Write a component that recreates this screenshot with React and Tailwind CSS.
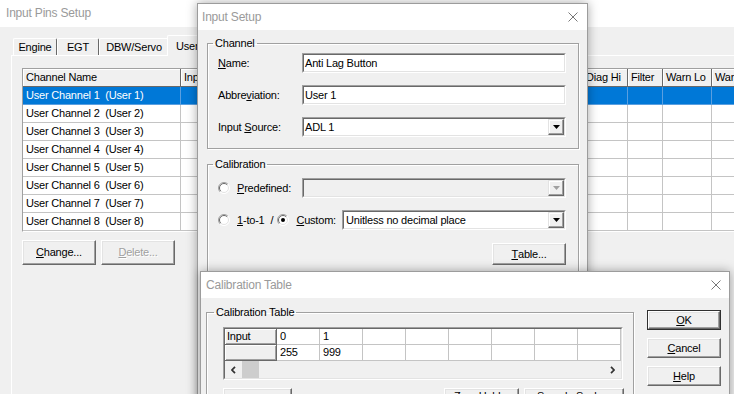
import React from "react";

function U({ children }) {
  return <span className="underline decoration-1 underline-offset-[1px]">{children}</span>;
}

function CloseX() {
  return (
    <svg width="10" height="10" viewBox="0 0 10 10" className="shrink-0">
      <path d="M0.5 0.5 L9.5 9.5 M9.5 0.5 L0.5 9.5" stroke="#777777" strokeWidth="1" fill="none" />
    </svg>
  );
}

function TitleBar({ children, pl, pr }) {
  return (
    <div className={`h-[26px] bg-white flex items-center justify-between ${pl} ${pr} text-[12px] text-[#9a9a9a]`}>
      <span>{children}</span>
      <CloseX />
    </div>
  );
}

function Btn({ children, className = "", disabled = false, align = "items-center" }) {
  return (
    <div
      className={`flex ${align} justify-center bg-[#f0f0f0] border border-t-white border-l-white border-r-[#696969] border-b-[#696969] shadow-[inset_-1px_-1px_0_#a0a0a0,inset_1px_1px_0_#e3e3e3] ${
        disabled ? "text-[#a0a0a0] [text-shadow:1px_1px_0_#ffffff]" : "text-black"
      } ${className}`}
    >
      {children}
    </div>
  );
}

function DefBtn({ children, className = "" }) {
  return (
    <div className={`border border-[#303030] ${className}`}>
      <Btn className="w-full h-full">{children}</Btn>
    </div>
  );
}

function Field({ className = "", bg = "bg-white", children }) {
  return (
    <div className={`border border-t-[#a0a0a0] border-l-[#a0a0a0] border-r-white border-b-white ${className}`}>
      <div className={`h-full border border-t-[#696969] border-l-[#696969] border-r-[#e3e3e3] border-b-[#e3e3e3] ${bg} flex items-center`}>
        {children}
      </div>
    </div>
  );
}

function DropBtn({ disabled = false }) {
  return (
    <div className="ml-auto w-[16px] h-full flex items-center justify-center bg-[#f0f0f0] border border-t-[#e3e3e3] border-l-[#e3e3e3] border-r-[#696969] border-b-[#696969] shadow-[inset_-1px_-1px_0_#a0a0a0,inset_1px_1px_0_#ffffff]">
      <svg width="7" height="4" viewBox="0 0 7 4">
        <polygon points="0,0 7,0 3.5,4" fill={disabled ? "#a0a0a0" : "#000000"} />
      </svg>
    </div>
  );
}

function Radio({ checked = false }) {
  return (
    <svg width="12" height="12" viewBox="0 0 12 12" className="shrink-0">
      <circle cx="6" cy="6" r="5.5" fill="white" />
      <path d="M2.1 9.9 A5.5 5.5 0 0 1 9.9 2.1" stroke="#a0a0a0" fill="none" />
      <path d="M9.9 2.1 A5.5 5.5 0 0 1 2.1 9.9" stroke="#ffffff" fill="none" />
      <path d="M2.8 9.2 A4.5 4.5 0 0 1 9.2 2.8" stroke="#696969" fill="none" />
      <path d="M9.2 2.8 A4.5 4.5 0 0 1 2.8 9.2" stroke="#e3e3e3" fill="none" />
      {checked && <circle cx="6" cy="6" r="2" fill="#000000" />}
    </svg>
  );
}

function Tab({ w, children }) {
  return (
    <div className={`${w} h-[17px] shrink-0 flex items-center justify-center border-t border-l border-white border-r border-r-[#696969] rounded-t-[2px]`}>
      {children}
    </div>
  );
}

const listCols = [
  { w: "w-[158px]", label: "Channel Name" },
  { w: "w-[80px]", label: "Inp" },
  { w: "w-[80px]", label: "" },
  { w: "w-[80px]", label: "" },
  { w: "w-[80px]", label: "" },
  { w: "w-[82px]", label: "" },
  { w: "w-[45px]", label: "Diag Hi" },
  { w: "w-[35px]", label: "Filter" },
  { w: "w-[49px]", label: "Warn Lo" },
  { w: "w-[60px]", label: "Warn Hi" },
];

function BackList() {
  const rows = [1, 2, 3, 4, 5, 6, 7, 8];
  return (
    <div className="ml-[10px] mt-[12px] w-[800px] border-t border-l border-[#a0a0a0] border-b border-b-white bg-white">
      <div className="flex h-[18px]">
        {listCols.map((c, i) => (
          <div
            key={i}
            className={`${c.w} shrink-0 h-full bg-[#f0f0f0] border-r border-b border-[#696969] shadow-[inset_1px_1px_0_#ffffff] pl-[3px] flex items-center whitespace-nowrap overflow-hidden`}
          >
            {c.label}
          </div>
        ))}
      </div>
      {rows.map((r) => (
        <div key={r} className={`flex h-[18px] ${r === 1 ? "bg-[#0078d7] text-white" : ""}`}>
          {listCols.map((c, i) => (
            <div
              key={i}
              className={`${c.w} shrink-0 h-full border-r border-b ${r === 1 ? "border-[#5a9fe0]" : "border-[#c4c4c4]"} pl-[3px] flex items-center whitespace-pre`}
            >
              {i === 0 ? `User Channel ${r}  (User ${r})` : ""}
            </div>
          ))}
        </div>
      ))}
    </div>
  );
}

function Chevron({ dir }) {
  return (
    <svg width="5" height="8" viewBox="0 0 5 8">
      <path
        d={dir === "left" ? "M4 0.8 L1 4 L4 7.2" : "M1 0.8 L4 4 L1 7.2"}
        stroke="#333333"
        strokeWidth="1.7"
        fill="none"
      />
    </svg>
  );
}

function CalGrid() {
  const data = [
    ["Input", "0", "1", "", "", "", "", "", ""],
    ["", "255", "999", "", "", "", "", "", ""],
  ];
  return (
    <div className="w-[400px] border border-t-[#a0a0a0] border-l-[#a0a0a0] border-r-white border-b-white">
      <div className="border border-t-[#696969] border-l-[#696969] border-r-[#e3e3e3] border-b-[#e3e3e3] bg-white">
        {data.map((row, ri) => (
          <div key={ri} className="flex h-[16px]">
            {row.map((v, ci) =>
              ci === 0 ? (
                <div
                  key={ci}
                  className="w-[52px] shrink-0 h-full bg-[#f0f0f0] border-r border-b border-[#696969] shadow-[inset_1px_1px_0_#ffffff,inset_-1px_-1px_0_#a0a0a0] pl-[2px] flex items-center"
                >
                  {v}
                </div>
              ) : (
                <div key={ci} className="w-[43px] shrink-0 h-full border-r border-b border-[#c4c4c4] pl-[3px] flex items-center">
                  {v}
                </div>
              )
            )}
          </div>
        ))}
        <div className="flex h-[17px] bg-[#f0f0f0]">
          <div className="w-[17px] h-full flex items-center justify-center">
            <Chevron dir="left" />
          </div>
          <div className="w-[17px] h-full bg-[#cdcdcd]" />
          <div className="flex-1" />
          <div className="w-[17px] h-full flex items-center justify-center">
            <Chevron dir="right" />
          </div>
        </div>
      </div>
    </div>
  );
}

const groupCls =
  "border border-[#a0a0a0] shadow-[inset_1px_1px_0_#ffffff,1px_1px_0_#ffffff]";

export default function App() {
  return (
    <div className="relative w-[734px] h-[394px] overflow-hidden bg-[#f0f0f0] font-['Liberation_Sans',Arial,sans-serif] text-[11px] leading-[13px] tracking-[-0.2px] text-black">
      {/* Window: Input Pins Setup (background) */}
      <div className="h-[27px] bg-white flex items-center pl-[6px] text-[12px] text-[#9a9a9a]">Input Pins Setup</div>
      <div className="pl-[11px] pt-[8px]">
        <div className="flex items-end h-[20px] pl-[2px]">
          <Tab w="w-[44px]">Engine</Tab>
          <Tab w="w-[42px]">EGT</Tab>
          <Tab w="w-[70px]">DBW/Servo</Tab>
          <div className="relative z-10 -ml-[2px] -mb-[1px] h-[21px] w-[60px] shrink-0 bg-[#f0f0f0] border-t border-l border-white border-r border-r-[#696969] rounded-t-[2px] pl-[8px] flex items-center">
            User
          </div>
        </div>
        <div className="border-t border-l border-white w-[800px] h-[400px]">
          <BackList />
          <div className="ml-[10px] mt-[8px] flex gap-[5px]">
            <Btn className="w-[74px] h-[25px]">
              <U>C</U>hange...
            </Btn>
            <Btn className="w-[74px] h-[25px]" disabled>
              <U>D</U>elete...
            </Btn>
          </div>
        </div>
      </div>

      {/* Window: Input Setup */}
      <div className="absolute z-20 left-[197px] top-[3px] w-[391px] h-[430px] bg-[#f0f0f0] border border-[#9c9c9c] shadow-[0_0_10px_rgba(0,0,0,0.35)]">
        <TitleBar pl="pl-[4px]" pr="pr-[9px]">Input Setup</TitleBar>
        <div className="pl-[9px]">
          <fieldset className={`w-[372px] mt-[7px] ${groupCls}`}>
            <legend className="ml-[5px] px-[2px] leading-[12px]">Channel</legend>
            <div className="pl-[10px] pt-[4px] pb-[11px] flex flex-col gap-[12px]">
              <div className="flex items-center h-[20px]">
                <div className="w-[84px]">
                  <U>N</U>ame:
                </div>
                <Field className="w-[264px] h-[20px]">
                  <span className="pl-[1px]">Anti Lag Button</span>
                </Field>
              </div>
              <div className="flex items-center h-[20px]">
                <div className="w-[84px]">
                  Abbre<U>v</U>iation:
                </div>
                <Field className="w-[264px] h-[20px]">
                  <span className="pl-[1px]">User 1</span>
                </Field>
              </div>
              <div className="flex items-center h-[20px]">
                <div className="w-[84px]">
                  Input <U>S</U>ource:
                </div>
                <Field className="w-[264px] h-[20px]">
                  <span className="pl-[1px]">ADL 1</span>
                  <DropBtn />
                </Field>
              </div>
            </div>
          </fieldset>
          <fieldset className={`w-[372px] mt-[9px] ${groupCls}`}>
            <legend className="ml-[5px] px-[2px] leading-[12px]">Calibration</legend>
            <div className="pl-[10px] pt-[8px] pb-[20px] w-[360px] flex flex-col">
              <div className="flex items-center h-[20px] w-[348px]">
                <Radio />
                <span className="ml-[7px]">
                  <U>P</U>redefined:
                </span>
                <Field className="ml-auto w-[264px] h-[20px]" bg="bg-[#f0f0f0]">
                  <DropBtn disabled />
                </Field>
              </div>
              <div className="flex items-center h-[20px] w-[348px] mt-[12px]">
                <Radio />
                <span className="ml-[7px]">
                  <U>1</U>-to-1
                </span>
                <span className="ml-[6px]">/</span>
                <span className="ml-[4px] flex">
                  <Radio checked />
                </span>
                <span className="ml-[7px]">
                  <U>C</U>ustom:
                </span>
                <Field className="ml-auto w-[224px] h-[20px]">
                  <span className="pl-[2px]">Unitless no decimal place</span>
                  <DropBtn />
                </Field>
              </div>
              <div className="flex justify-end w-[348px] mt-[13px]">
                <Btn className="w-[74px] h-[22px]">
                  <U>T</U>able...
                </Btn>
              </div>
            </div>
          </fieldset>
        </div>
      </div>

      {/* Window: Calibration Table */}
      <div className="absolute z-30 left-[200px] top-[271px] w-[530px] h-[140px] bg-[#f0f0f0] border border-[#9c9c9c] shadow-[0_0_10px_rgba(0,0,0,0.35)]">
        <TitleBar pl="pl-[5px]" pr="pr-[8px]">Calibration Table</TitleBar>
        <div className="flex items-start">
          <fieldset className={`ml-[5px] mt-[8px] w-[428px] ${groupCls}`}>
            <legend className="ml-[7px] px-[2px] leading-[12px]">Calibration Table</legend>
            <div className="pl-[16px] pt-[9px] pb-[20px]">
              <CalGrid />
              <div className="flex mt-[8px]">
                <Btn className="w-[69px] h-[23px]" align="items-start"></Btn>
                <Btn className="ml-[152px] w-[75px] h-[23px] pt-[1px]" align="items-start">Zero Hold...</Btn>
                <Btn className="ml-[5px] w-[100px] h-[23px] pt-[1px]" align="items-start">Sample Scale...</Btn>
              </div>
            </div>
          </fieldset>
          <div className="ml-[13px] mt-[12px] flex flex-col gap-[8px]">
            <DefBtn className="w-[74px] h-[20px]">
              <U>O</U>K
            </DefBtn>
            <Btn className="w-[74px] h-[20px]">
              <U>C</U>ancel
            </Btn>
            <Btn className="w-[74px] h-[20px]">
              <U>H</U>elp
            </Btn>
          </div>
        </div>
      </div>
    </div>
  );
}
